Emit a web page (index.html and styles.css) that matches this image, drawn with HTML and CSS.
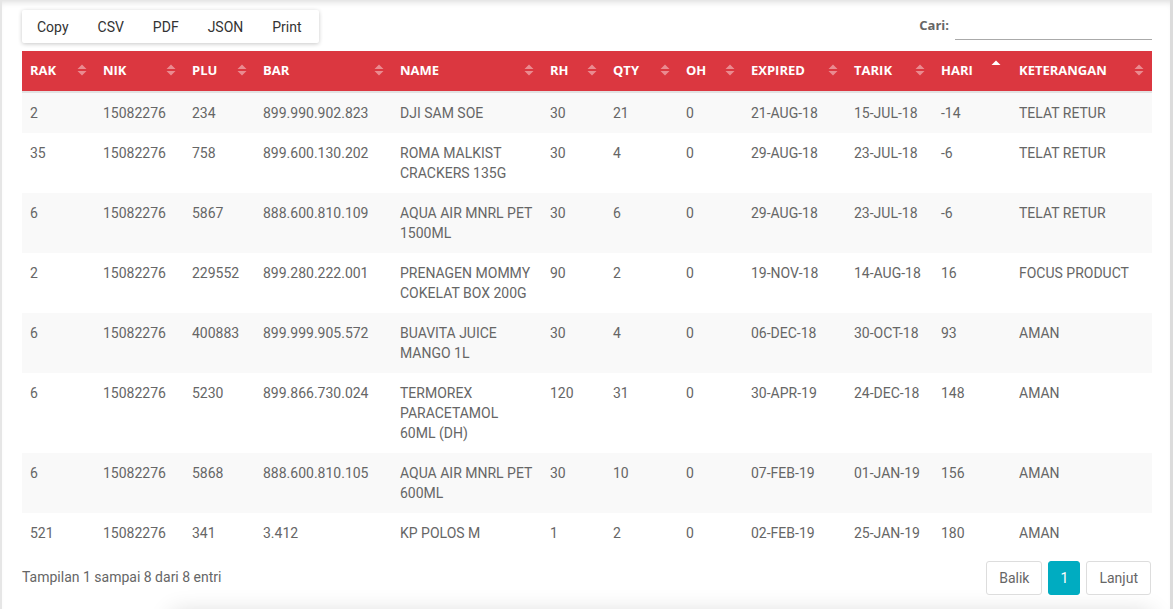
FILE: index.html
```html
<!DOCTYPE html>
<html lang="id">
<head>
<meta charset="utf-8">
<title>Data Retur</title>
<link rel="stylesheet" href="styles.css">
</head>
<body>
<div class="card">
  <div class="toolbar">
    <div class="btn-group">
      <button class="tb-btn">Copy</button>
      <button class="tb-btn">CSV</button>
      <button class="tb-btn">PDF</button>
      <button class="tb-btn">JSON</button>
      <button class="tb-btn">Print</button>
    </div>
    <label class="search">Cari: <input type="text" class="search-input"></label>
  </div>

  <table class="data">
    <colgroup>
      <col style="width:73px"><col style="width:89px"><col style="width:71px"><col style="width:137px">
      <col style="width:150px"><col style="width:63px"><col style="width:73px"><col style="width:65px">
      <col style="width:103px"><col style="width:87px"><col style="width:78px"><col style="width:141px">
    </colgroup>
    <thead>
      <tr>
        <th><div class="th"><span>RAK</span><svg class="sort" viewBox="0 0 10 12"><path d="M0.5 5 L5 0.5 L9.5 5Z M0.5 7 L5 11.5 L9.5 7Z"/></svg></div></th>
        <th><div class="th"><span>NIK</span><svg class="sort" viewBox="0 0 10 12"><path d="M0.5 5 L5 0.5 L9.5 5Z M0.5 7 L5 11.5 L9.5 7Z"/></svg></div></th>
        <th><div class="th"><span>PLU</span><svg class="sort" viewBox="0 0 10 12"><path d="M0.5 5 L5 0.5 L9.5 5Z M0.5 7 L5 11.5 L9.5 7Z"/></svg></div></th>
        <th><div class="th"><span>BAR</span><svg class="sort" viewBox="0 0 10 12"><path d="M0.5 5 L5 0.5 L9.5 5Z M0.5 7 L5 11.5 L9.5 7Z"/></svg></div></th>
        <th><div class="th"><span>NAME</span><svg class="sort" viewBox="0 0 10 12"><path d="M0.5 5 L5 0.5 L9.5 5Z M0.5 7 L5 11.5 L9.5 7Z"/></svg></div></th>
        <th><div class="th"><span>RH</span><svg class="sort" viewBox="0 0 10 12"><path d="M0.5 5 L5 0.5 L9.5 5Z M0.5 7 L5 11.5 L9.5 7Z"/></svg></div></th>
        <th><div class="th"><span>QTY</span><svg class="sort" viewBox="0 0 10 12"><path d="M0.5 5 L5 0.5 L9.5 5Z M0.5 7 L5 11.5 L9.5 7Z"/></svg></div></th>
        <th><div class="th"><span>OH</span><svg class="sort" viewBox="0 0 10 12"><path d="M0.5 5 L5 0.5 L9.5 5Z M0.5 7 L5 11.5 L9.5 7Z"/></svg></div></th>
        <th><div class="th"><span>EXPIRED</span><svg class="sort" viewBox="0 0 10 12"><path d="M0.5 5 L5 0.5 L9.5 5Z M0.5 7 L5 11.5 L9.5 7Z"/></svg></div></th>
        <th><div class="th"><span>TARIK</span><svg class="sort" viewBox="0 0 10 12"><path d="M0.5 5 L5 0.5 L9.5 5Z M0.5 7 L5 11.5 L9.5 7Z"/></svg></div></th>
        <th><div class="th"><span>HARI</span><svg class="sort asc" viewBox="0 0 10 12"><path d="M0.5 5 L5 0.5 L9.5 5Z"/></svg></div></th>
        <th><div class="th"><span>KETERANGAN</span><svg class="sort" viewBox="0 0 10 12"><path d="M0.5 5 L5 0.5 L9.5 5Z M0.5 7 L5 11.5 L9.5 7Z"/></svg></div></th>
      </tr>
    </thead>
    <tbody>
      <tr><td>2</td><td>15082276</td><td>234</td><td>899.990.902.823</td><td>DJI SAM SOE</td><td>30</td><td>21</td><td>0</td><td>21-AUG-18</td><td>15-JUL-18</td><td>-14</td><td>TELAT RETUR</td></tr>
      <tr><td>35</td><td>15082276</td><td>758</td><td>899.600.130.202</td><td>ROMA MALKIST CRACKERS 135G</td><td>30</td><td>4</td><td>0</td><td>29-AUG-18</td><td>23-JUL-18</td><td>-6</td><td>TELAT RETUR</td></tr>
      <tr><td>6</td><td>15082276</td><td>5867</td><td>888.600.810.109</td><td>AQUA AIR MNRL PET 1500ML</td><td>30</td><td>6</td><td>0</td><td>29-AUG-18</td><td>23-JUL-18</td><td>-6</td><td>TELAT RETUR</td></tr>
      <tr><td>2</td><td>15082276</td><td>229552</td><td>899.280.222.001</td><td>PRENAGEN MOMMY COKELAT BOX 200G</td><td>90</td><td>2</td><td>0</td><td>19-NOV-18</td><td>14-AUG-18</td><td>16</td><td>FOCUS PRODUCT</td></tr>
      <tr><td>6</td><td>15082276</td><td>400883</td><td>899.999.905.572</td><td>BUAVITA JUICE MANGO 1L</td><td>30</td><td>4</td><td>0</td><td>06-DEC-18</td><td>30-OCT-18</td><td>93</td><td>AMAN</td></tr>
      <tr><td>6</td><td>15082276</td><td>5230</td><td>899.866.730.024</td><td>TERMOREX PARACETAMOL 60ML (DH)</td><td>120</td><td>31</td><td>0</td><td>30-APR-19</td><td>24-DEC-18</td><td>148</td><td>AMAN</td></tr>
      <tr><td>6</td><td>15082276</td><td>5868</td><td>888.600.810.105</td><td>AQUA AIR MNRL PET 600ML</td><td>30</td><td>10</td><td>0</td><td>07-FEB-19</td><td>01-JAN-19</td><td>156</td><td>AMAN</td></tr>
      <tr><td>521</td><td>15082276</td><td>341</td><td>3.412</td><td>KP POLOS M</td><td>1</td><td>2</td><td>0</td><td>02-FEB-19</td><td>25-JAN-19</td><td>180</td><td>AMAN</td></tr>
    </tbody>
  </table>

  <div class="footer">
    <div class="info">Tampilan 1 sampai 8 dari 8 entri</div>
    <div class="pager">
      <button class="pg-btn">Balik</button>
      <button class="pg-btn active">1</button>
      <button class="pg-btn">Lanjut</button>
    </div>
  </div>
  <div class="below"></div>
</div>
</body>
</html>
```

FILE: styles.css
```css
html, body {
  margin: 0;
  padding: 0;
  background: #fff;
  height: 100%;
  overflow: hidden;
}

body {
  font-family: Roboto, "Liberation Sans", Arial, sans-serif;
  font-size: 14px;
  color: #666;
}

.card {
  min-height: 609px;
  box-sizing: border-box;
  border-left: 2px solid #e6e6e6;
  border-right: 3px solid #dcdcdc;
  padding: 10px 18px 0 20px;
  box-shadow: inset 0 6px 6px -4px rgba(0, 0, 0, 0.14);
  overflow: hidden;
}

.toolbar {
  display: flex;
  justify-content: space-between;
  align-items: flex-start;
  height: 33px;
  margin-bottom: 8px;
}

.btn-group {
  display: flex;
  background: #fff;
  box-shadow: 0 1px 4px rgba(0, 0, 0, 0.22);
  border-radius: 2px;
  height: 33px;
  padding: 0 3px 0 0;
}

.tb-btn {
  font-family: Roboto, "Liberation Sans", Arial, sans-serif;
  font-size: 14px;
  color: #333;
  background: transparent;
  border: 0;
  padding: 0 14.3px 0 15px;
  margin-right: -0.3px;
  height: 33px;
  cursor: pointer;
}

.search {
  display: flex;
  align-items: center;
  font-family: "Open Sans", "Liberation Sans", sans-serif;
  font-weight: 700;
  font-size: 13px;
  color: #666;
  height: 30px;
}

.search-input {
  margin-left: 6px;
  width: 197px;
  height: 29px;
  box-sizing: border-box;
  border: 0;
  border-bottom: 1px solid #aaa;
  outline: none;
  background: transparent;
  padding: 0;
}

.data {
  width: 1130px;
  table-layout: fixed;
  border-collapse: collapse;
}

.data th {
  background: #db3740;
  color: #fff;
  font-family: "Open Sans", "Liberation Sans", sans-serif;
  font-weight: 700;
  font-size: 13px;
  text-align: left;
  height: 38px;
  padding: 0 8px 2px;
  box-sizing: content-box;
  border-bottom: 2px solid #e2e2e2;
}

.th {
  display: flex;
  justify-content: space-between;
  align-items: center;
}

.sort {
  width: 10px;
  height: 12px;
  flex: none;
  fill: rgba(255, 255, 255, 0.42);
}

.sort.asc {
  fill: #fff;
  margin-top: -9px;
  margin-right: 2px;
}

.data td {
  padding: 10px 8px;
  line-height: 20px;
  vertical-align: top;
  color: #666;
}

.data tbody tr:nth-child(odd) td {
  background: #f9f9f9;
}

.footer {
  display: flex;
  justify-content: space-between;
  align-items: center;
  margin-top: 8px;
  padding-right: 1px;
}

.info {
  color: #666;
  font-size: 14px;
  margin-top: -3px;
}

.pager {
  display: flex;
  gap: 6px;
}

.pg-btn {
  font-family: Roboto, "Liberation Sans", Arial, sans-serif;
  font-size: 14px;
  color: #666;
  background: #fff;
  border: 1px solid #ddd;
  border-radius: 3px;
  height: 34px;
  padding: 0 12px;
  cursor: pointer;
}

.pg-btn.active {
  background: #00acc1;
  border-color: #00acc1;
  color: #fff;
  width: 32px;
  padding: 0;
}

.below {
  margin: 22px 0 0 150px;
  height: 40px;
  background: #fff;
  box-shadow: 0 -4px 24px rgba(0, 0, 0, 0.16);
}
```
